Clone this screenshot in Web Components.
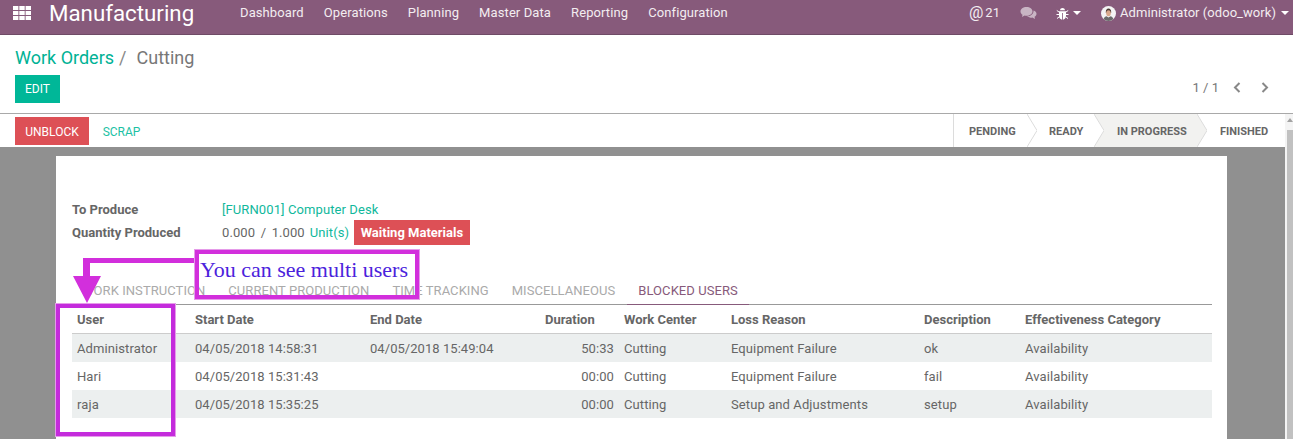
<!DOCTYPE html>
<html>
<head>
<meta charset="utf-8">
<style>
    html, body { margin: 0; height: 100%; overflow: hidden; }
    body { font-family: Roboto, "Noto Sans", sans-serif; font-size: 13px; letter-spacing: .1px; color: #666; background: #fff; }
    #app { display: flex; flex-direction: column; height: 439px; position: relative; }
</style>
</head>
<body>
<div id="app">
    <app-navbar></app-navbar>
    <control-panel></control-panel>
    <scroll-pane>
        <status-bar></status-bar>
        <form-area>
            <form-sheet></form-sheet>
        </form-area>
    </scroll-pane>
    <note-overlay></note-overlay>
</div>

<script>
class AppNavbar extends HTMLElement {
    constructor() {
        super();
        this.attachShadow({ mode: "open" });
    }

    connectedCallback() {
        const menus = ["Dashboard", "Operations", "Planning", "Master Data", "Reporting", "Configuration"];
        this.shadowRoot.innerHTML = `
            <style>
                :host { display: flex; align-items: center; height: 26px; padding-bottom: 8px; background: #875a7b; border-bottom: 1px solid #6f4b66; color: #fff; flex: none; line-height: 26px; }
                .apps { display: block; margin-left: 13px; width: 18px; height: 14px; }
                .brand { font-size: 22.3px; letter-spacing: 0; margin-left: 18px; width: 181px; }
                .menu { display: flex; flex: 1; }
                .menu span { padding: 0 10px; color: #f3edf1; }
                .right { display: flex; align-items: center; color: #f3edf1; letter-spacing: .05px; }
                .at { font-size: 16px; margin-right: 2px; }
                .count { margin-right: 20px; }
                .caret { width: 0; height: 0; border: 4px solid transparent; border-top-color: #fff; border-bottom: 0; display: inline-block; }
                svg { display: block; }
            </style>
            <svg class="apps" viewBox="0 0 18 14" fill="#fff">
                <rect x="0" y="0" width="5.4" height="4"/><rect x="6.300" y="0" width="5.400" height="4"/><rect x="12.600" y="0" width="5.400" height="4"/>
                <rect x="0" y="5" width="5.4" height="4"/><rect x="6.300" y="5" width="5.400" height="4"/><rect x="12.600" y="5" width="5.400" height="4"/>
                <rect x="0" y="10" width="5.4" height="4"/><rect x="6.300" y="10" width="5.400" height="4"/><rect x="12.600" y="10" width="5.400" height="4"/>
            </svg>
            <div class="brand">Manufacturing</div>
            <div class="menu">${menus.map((m) => `<span>${m}</span>`).join("")}</div>
            <div class="right">
                <span class="at">@</span><span class="count">21</span>
                <svg width="17" height="14" viewBox="0 0 17 14" style="margin-right:19px"><path fill="#c9b5c4" d="M6.500 1C3 1 .5 3 .5 5.400c0 1.300.8 2.500 2 3.300L2 11l2.600-1.500c.6.1 1.200.2 1.900.2 3.500 0 6-2 6-4.300S10 1 6.500 1z"/><path fill="#c9b5c4" d="M13.500 4.500c.3 3-2.500 5.800-6.300 6 .9.8 2.200 1.200 3.600 1.200.5 0 1 0 1.500-.2L15 13l-.4-2.300c1.200-.7 1.900-1.800 1.900-3 0-1.400-1.200-2.600-3-3.200z"/></svg>
                <svg width="13" height="13" viewBox="0 0 13 13" style="margin-right:4px"><path fill="#fff" d="M4 3.200C4.200 1.800 5.200 1 6.500 1S8.800 1.800 9 3.200zM3 4.200h7V9c0 2-1.500 3.500-3.100 3.700V6H6.100v6.700C4.500 12.500 3 11 3 9z"/><path stroke="#fff" stroke-width="1" fill="none" d="M3 5L.8 3.500M10 5l2.200-1.500M3 7.500H.5M10 7.500h2.500M3 10l-2 1.500M10 10l2 1.500"/></svg>
                <i class="caret" style="margin-right:20px"></i>
                <svg width="15" height="15" viewBox="0 0 15 15" style="margin-right:4px"><circle cx="7.500" cy="7.500" r="7.500" fill="#f4f4f4"/><path fill="#6b6b6b" d="M2.500 13c.6-1.800 2-2.600 3-2.800l2 1.300 2-1.300c1 .2 2.400 1 3 2.800a7.500 7.500 0 0 1-10 0z"/><path fill="#4a3a33" d="M4.800 6c0-2.200 1.100-3.400 2.700-3.400S10.200 3.800 10.200 6v.8H4.800z"/><ellipse cx="7.500" cy="7.200" rx="2.300" ry="3" fill="#d9a98c"/></svg>
                <span>Administrator (odoo_work)</span>
                <i class="caret" style="margin:0 4px 0 5px"></i>
            </div>
        `;
    }
}

class ControlPanel extends HTMLElement {
    constructor() {
        super();
        this.attachShadow({ mode: "open" });
    }

    connectedCallback() {
        this.shadowRoot.innerHTML = `
            <style>
                :host { display: block; height: 79px; padding: 0 24px 0 15px; box-sizing: border-box; background: #fff; border-bottom: 1px solid #a9a9a9; flex: none; }
                .crumbs { display: flex; font-size: 18px; letter-spacing: 0; line-height: 25px; padding-top: 10px; color: #777; }
                .crumbs a { color: #00b295; }
                .crumbs .sep { margin: 0 10px 0 5px; color: #888; }
                .row { display: flex; justify-content: space-between; align-items: center; margin-top: 5px; }
                button { font: inherit; font-size: 12px; height: 28px; width: 45px; border: 0; padding: 0; background: #00b798; color: #fff; display: block; }
                .pager { display: flex; align-items: center; color: #777; margin-top: -3px; }
                .pager span { margin-right: 14px; letter-spacing: 0; }
                .pager svg { display: block; margin-right: 20px; }
                .pager svg:last-child { margin-right: 0; }
            </style>
            <div class="crumbs"><a>Work Orders</a><span class="sep">/</span><span>Cutting</span></div>
            <div class="row">
                <button>EDIT</button>
                <div class="pager">
                    <span>1 / 1</span>
                    <svg width="8" height="11" viewBox="0 0 8 11"><path d="M6.500 1L2 5.500 6.500 10" fill="none" stroke="#888" stroke-width="2"/></svg>
                    <svg width="8" height="11" viewBox="0 0 8 11"><path d="M1.500 1L6 5.500 1.500 10" fill="none" stroke="#888" stroke-width="2"/></svg>
                </div>
            </div>
        `;
    }
}

class ScrollPane extends HTMLElement {
    constructor() {
        super();
        this.attachShadow({ mode: "open" });
    }

    connectedCallback() {
        this.shadowRoot.innerHTML = `
            <style>
                :host { display: flex; flex: 1; min-height: 0; }
                .content { flex: 1; min-width: 0; display: flex; flex-direction: column; }
                .track { width: 8px; flex: none; background: #f4f4f4; box-sizing: border-box; padding: 4px 0 0 2px; display: flex; flex-direction: column; }
                .up { width: 0; height: 0; border: 3px solid transparent; border-bottom: 4px solid #a3a3a3; border-top: 0; margin: 0 0 8px 0; }
                .thumb { flex: 1; background: #c1c1c1; }
            </style>
            <div class="content"><slot></slot></div>
            <div class="track"><div class="up"></div><div class="thumb"></div></div>
        `;
    }
}

class StatusBar extends HTMLElement {
    constructor() {
        super();
        this.attachShadow({ mode: "open" });
    }

    connectedCallback() {
        const steps = [["PENDING", 74, 16], ["READY", 67, 22], ["IN PROGRESS", 103, 23, true], ["FINISHED", 88, 23]];
        this.shadowRoot.innerHTML = `
            <style>
                :host { display: flex; align-items: stretch; height: 33px; background: #fff; flex: none; padding-left: 15px; font-size: 12px; }
                .unblock { font: inherit; height: 28px; width: 74px; margin-top: 3px; padding: 1px 0 0; border: 0; background: #dd5056; color: #fff; }
                .scrap { font: inherit; height: 28px; width: 65px; margin-top: 3px; padding: 1px 0 0; border: 0; background: none; color: #1cc1a4; }
                .steps { display: flex; margin-left: auto; border-left: 1px solid #dcdcdc; }
                .step { position: relative; display: flex; align-items: center; font-size: 11px; font-weight: 700; letter-spacing: 0; color: #666; box-sizing: border-box; padding-top: 1px; }
                .step.on { background: #f2f2f0; }
                .step svg { position: absolute; top: 0; right: -10px; z-index: 1; }
            </style>
            <button class="unblock">UNBLOCK</button>
            <button class="scrap">SCRAP</button>
            <div class="steps">
                ${steps.map(([name, w, pad, on], i) => `
                    <div class="step ${on ? "on" : ""}" style="width:${i === 0 ? w - 1 : w}px;padding-left:${i === 0 ? pad - 1 : pad}px">${name}
                        ${i < steps.length - 1 ? `<svg width="10" height="33" viewBox="0 0 10 33"><path d="M0 0L10 16.500 0 33" fill="${on ? "#f2f2f0" : "#fff"}" stroke="#dcdcdc"/></svg>` : ""}
                    </div>`).join("")}
            </div>
        `;
    }
}

class FormArea extends HTMLElement {
    constructor() {
        super();
        this.attachShadow({ mode: "open" });
    }

    connectedCallback() {
        this.shadowRoot.innerHTML = `
            <style>
                :host { display: block; flex: 1; min-height: 0; background: #909090; overflow: hidden; padding: 9px 58px 0 56px; }
            </style>
            <slot></slot>
        `;
    }
}

class FormSheet extends HTMLElement {
    constructor() {
        super();
        this.attachShadow({ mode: "open" });
    }

    connectedCallback() {
        const tabs = ["WORK INSTRUCTION", "CURRENT PRODUCTION", "TIME TRACKING", "MISCELLANEOUS", "BLOCKED USERS"];
        this.shadowRoot.innerHTML = `
            <style>
                :host { display: block; background: #fff; height: 400px; padding: 44px 15px 0 16px; box-sizing: border-box; }
                .fields { display: grid; grid-template-columns: 150px 1fr; color: #666; }
                .fields b { line-height: 19px; font-weight: 700; letter-spacing: 0; }
                .fields div { line-height: 19px; }
                .link { color: #10b89c; }
                .qty { display: flex; align-items: center; height: 27px; }
                .fields b.q { line-height: 27px; }
                .badge { background: #dd5056; color: #fff; font-weight: 700; letter-spacing: 0; height: 25px; line-height: 25px; padding: 0 6.500px; margin-left: 5px; }
                .tabs { display: flex; margin-top: 32px; height: 26px; border-bottom: 1px solid #999; letter-spacing: .06px; }
                .tabs span { padding: 0 11px; margin-right: 1px; line-height: 25px; color: #aaa; box-sizing: border-box; height: 27px; }
                .tabs span:first-child { padding-left: 10px; }
                .tabs span.on { color: #875a7b; border-bottom: 1px solid #875a7b; }
                table { border-collapse: collapse; table-layout: fixed; width: 1140px; color: #666; }
                th { text-align: left; height: 28px; padding: 0 5px; font-weight: 700; letter-spacing: 0; border-bottom: 1px solid #ccc; }
                td { height: 28px; padding: 0 5px; }
                td.dt { letter-spacing: .05px; }
                tr.odd td { background: #ecefef; }
                .num { text-align: right; }
            </style>
            <div class="fields">
                <b>To Produce</b><div class="link">[FURN001] Computer Desk</div>
                <b class="q">Quantity Produced</b>
                <div class="qty"><span>0.000</span><span style="margin:0 5.500px">/</span><span>1.000</span><span class="link" style="margin-left:5px">Unit(s)</span><span class="badge">Waiting Materials</span></div>
            </div>
            <div class="tabs">${tabs.map((t, i) => `<span class="${i === 4 ? "on" : ""}">${t}</span>`).join("")}</div>
            <table>
                <colgroup><col style="width:118px"><col style="width:175px"><col style="width:175px"><col style="width:79px"><col style="width:107px"><col style="width:193px"><col style="width:101px"><col style="width:192px"></colgroup>
                <thead><tr><th>User</th><th>Start Date</th><th>End Date</th><th>Duration</th><th>Work Center</th><th>Loss Reason</th><th>Description</th><th>Effectiveness Category</th></tr></thead>
                <tbody>
                    <tr class="odd"><td>Administrator</td><td class="dt">04/05/2018 14:58:31</td><td class="dt">04/05/2018 15:49:04</td><td class="num">50:33</td><td>Cutting</td><td>Equipment Failure</td><td>ok</td><td>Availability</td></tr>
                    <tr><td>Hari</td><td class="dt">04/05/2018 15:31:43</td><td></td><td class="num">00:00</td><td>Cutting</td><td>Equipment Failure</td><td>fail</td><td>Availability</td></tr>
                    <tr class="odd"><td>raja</td><td class="dt">04/05/2018 15:35:25</td><td></td><td class="num">00:00</td><td>Cutting</td><td>Setup and Adjustments</td><td>setup</td><td>Availability</td></tr>
                </tbody>
            </table>
        `;
    }
}

// the magenta boxes and arrow drawn over the screenshot
class NoteOverlay extends HTMLElement {
    constructor() {
        super();
        this.attachShadow({ mode: "open" });
    }

    connectedCallback() {
        this.shadowRoot.innerHTML = `
            <style>
                :host { position: absolute; inset: 0; display: block; pointer-events: none; letter-spacing: 0; }
                .box { position: absolute; box-sizing: border-box; border: 5px solid #d22fdc; outline: 1px solid #e59be9; outline-offset: -1px; }
                .text { left: 194px; top: 249px; width: 226px; height: 51px; font-family: "Liberation Serif", serif; font-size: 22px; color: #4b22dc; line-height: 32px; padding-left: 1px; white-space: nowrap; }
                .users { left: 55px; top: 303px; width: 121px; height: 134px; border-color: #c42bdc; }
                svg { position: absolute; left: 0; top: 0; }
            </style>
            <svg width="200" height="310"><path fill="#d22fdc" d="M83 258h112v5H90v14h-7zM73 276h28l-14 27z"/></svg>
            <div class="box text">You can see multi users</div>
            <div class="box users"></div>
        `;
    }
}

customElements.define("app-navbar", AppNavbar);
customElements.define("control-panel", ControlPanel);
customElements.define("scroll-pane", ScrollPane);
customElements.define("status-bar", StatusBar);
customElements.define("form-area", FormArea);
customElements.define("form-sheet", FormSheet);
customElements.define("note-overlay", NoteOverlay);
</script>
</body>
</html>
